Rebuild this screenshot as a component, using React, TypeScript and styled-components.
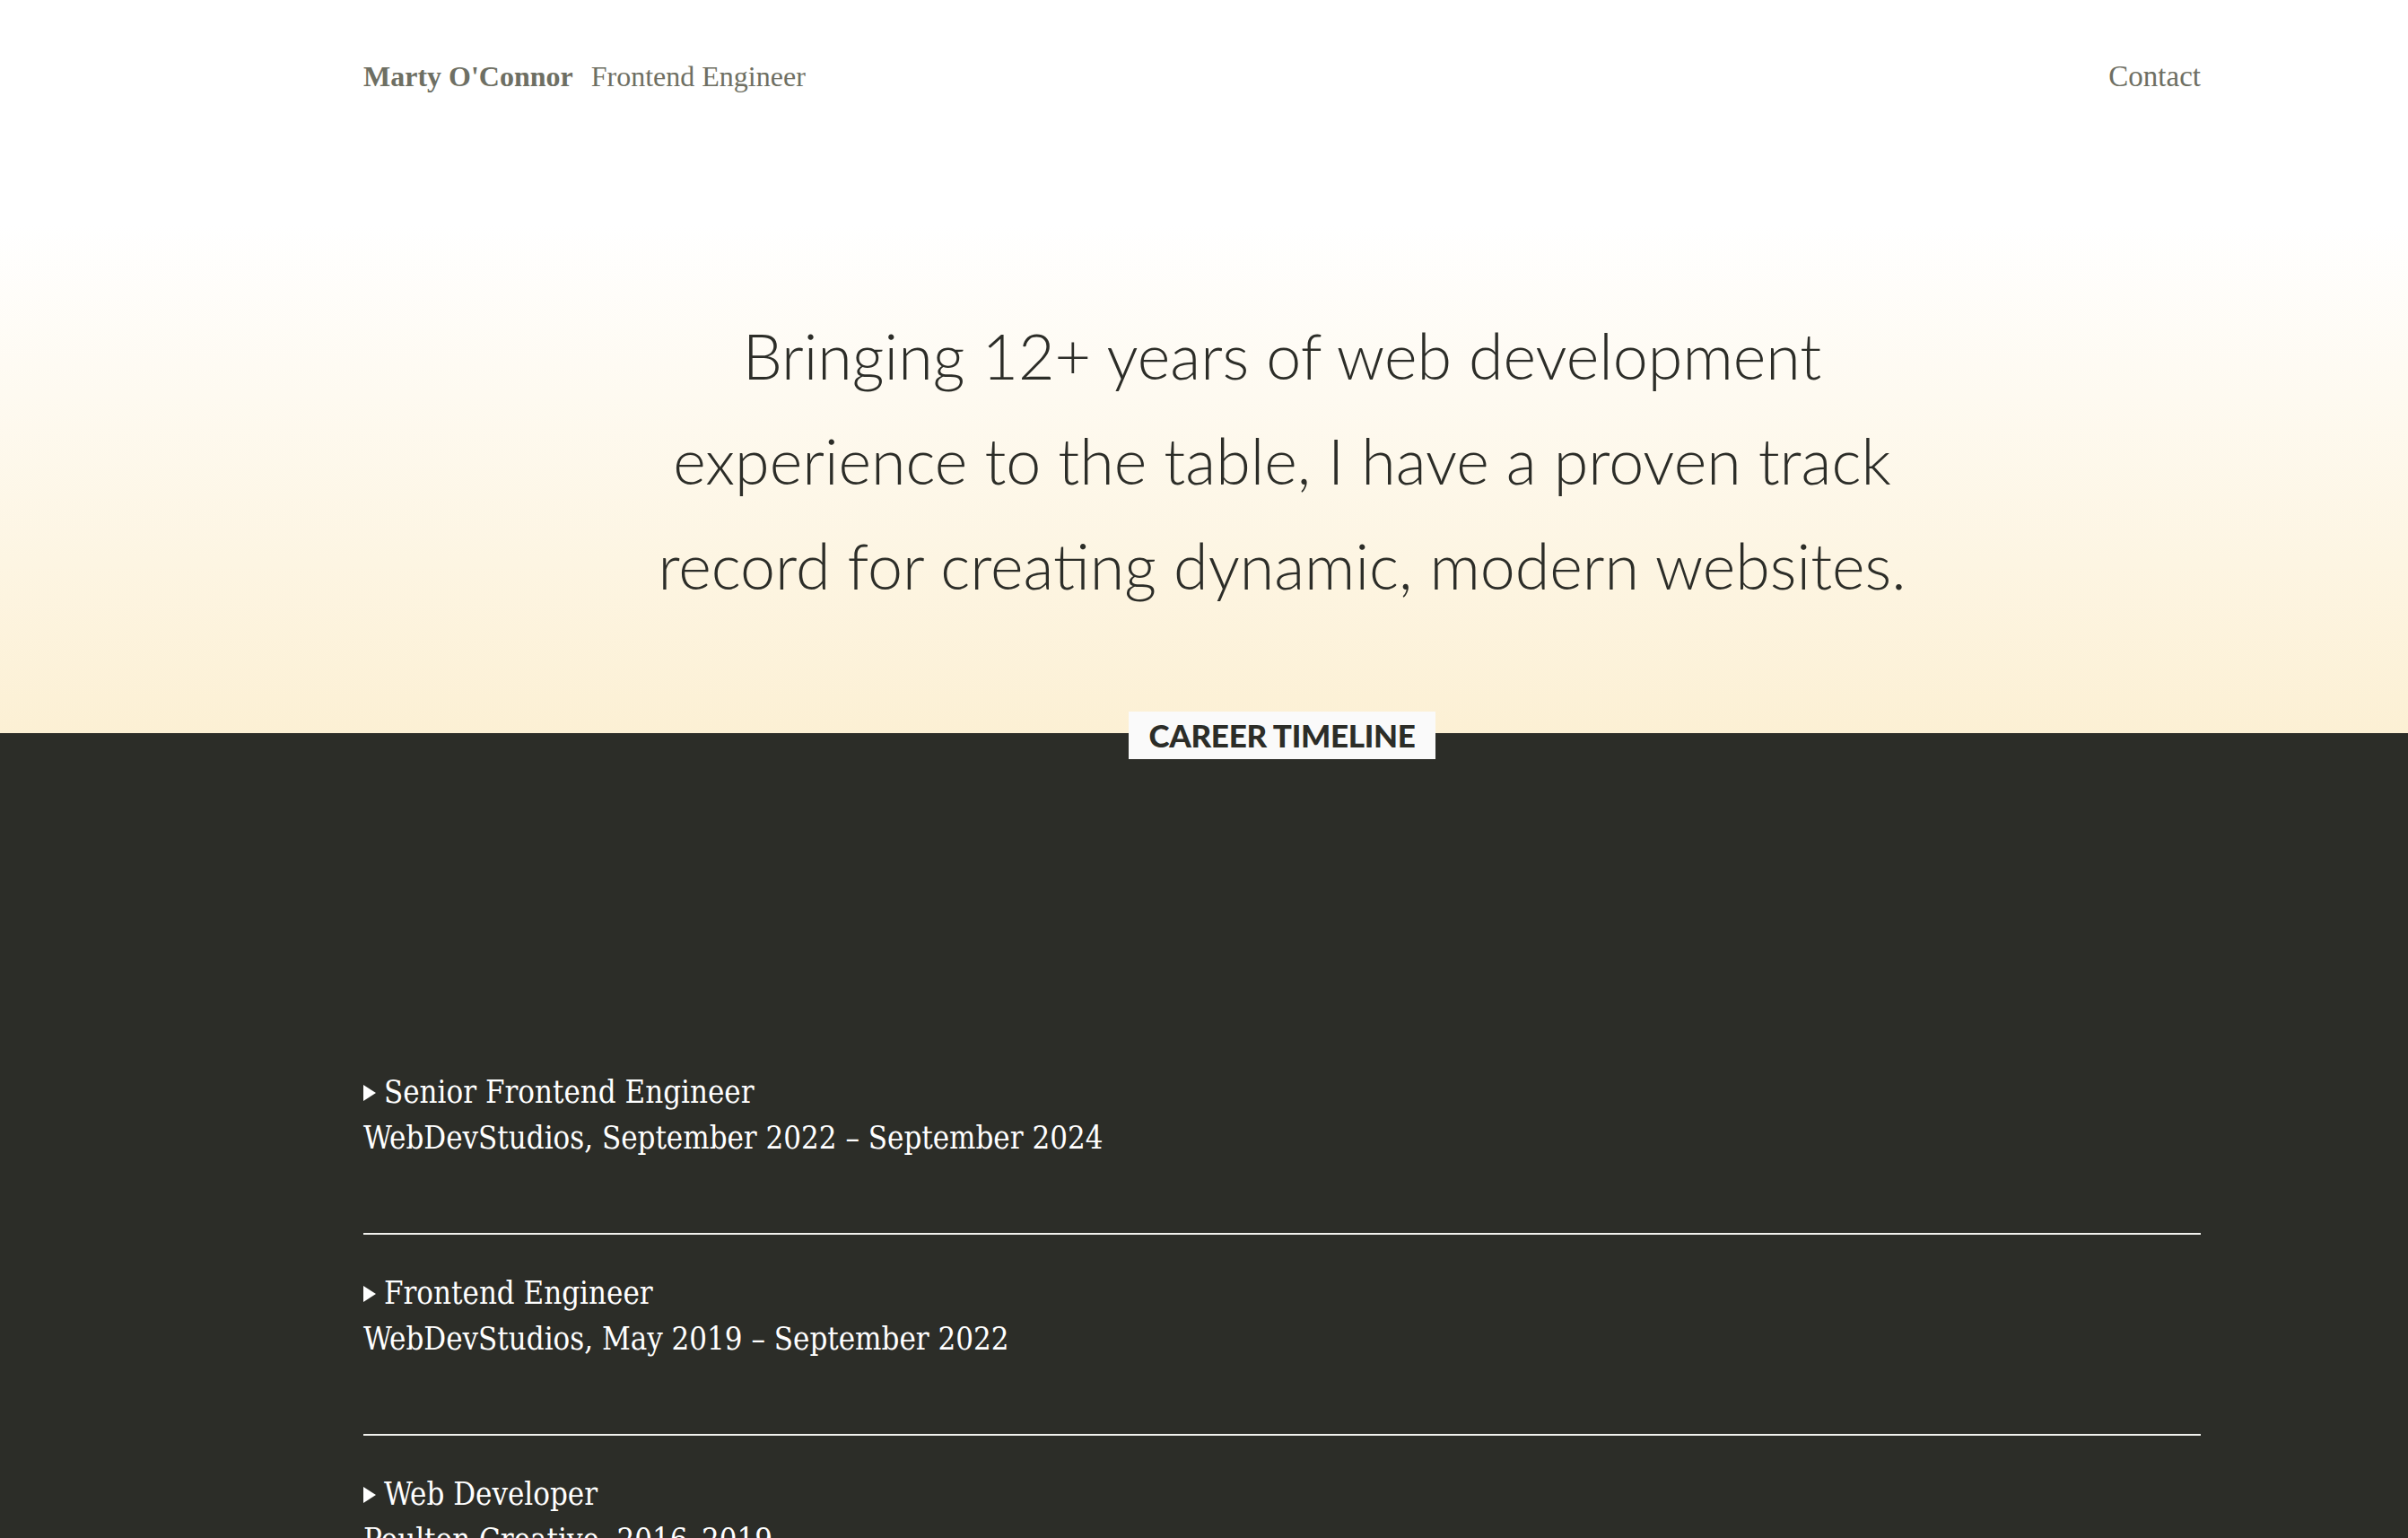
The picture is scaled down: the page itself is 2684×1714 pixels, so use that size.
import React from "react";
import styled, { createGlobalStyle } from "styled-components";

const Global = createGlobalStyle`
  html, body { margin: 0; padding: 0; background: #2c2d28; }
  * { box-sizing: border-box; }
`;

const Page = styled.div`
  height: 1714px;
  overflow: hidden;
  display: flex;
  flex-direction: column;
`;

const Top = styled.div`
  background: linear-gradient(180deg, #ffffff 0px, #ffffff 250px, #fcf0d4 817px);
  height: 817px;
  flex-shrink: 0;
  display: flex;
  flex-direction: column;
`;

const Container = styled.div`
  width: 2048px;
  margin-left: 405px;
`;

const Header = styled.header`
  padding-top: 67px;
  display: flex;
  justify-content: space-between;
  align-items: baseline;
  font-family: "Liberation Serif", "Times New Roman", serif;
  color: #6e6f63;
`;

const Brand = styled.div`
  display: flex;
  align-items: baseline;
  gap: 20px;
`;

const Name = styled.span`
  font-weight: 700;
  font-size: 32px;
`;

const Role = styled.span`
  font-size: 32px;
`;

const Contact = styled.a`
  font-size: 33px;
  color: inherit;
  text-decoration: none;
`;

const Hero = styled.p`
  margin: 234px auto 0;
  max-width: 1440px;
  text-align: center;
  font-family: Lato, "Open Sans", sans-serif;
  font-weight: 300;
  font-size: 70px;
  line-height: 117px;
  color: #2c2d28;
`;

const Dark = styled.section`
  background: #2c2d28;
  flex: 1;
  display: flex;
  flex-direction: column;
`;

const LabelRow = styled.div`
  display: flex;
  justify-content: center;
`;

const Label = styled.h2`
  margin: -24px 0 0;
  background: #fafafa;
  color: #2c2d28;
  font-family: Lato, "Open Sans", sans-serif;
  font-weight: 900;
  font-size: 35px;
  line-height: 53px;
  padding: 0 22px;
  text-transform: uppercase;
  letter-spacing: -0.3px;
`;

const Timeline = styled.ul`
  list-style: none;
  margin: 306px 0 0;
  padding: 0;
`;

const Item = styled.li`
  padding: 40px 0 80px;
  border-top: 2px solid #f2f2ee;
  &:first-child { border-top: none; }
  font-family: "DejaVu Serif Condensed", "DejaVu Serif", serif;
  color: #ffffff;
  font-size: 34.5px;
  line-height: 51px;
`;

const Title = styled.div`
  display: flex;
  align-items: center;
  gap: 9px;
`;

const Arrow = styled.span`
  width: 0;
  height: 0;
  border-top: 9px solid transparent;
  border-bottom: 9px solid transparent;
  border-left: 14px solid #ffffff;
`;

const Meta = styled.div``;

const jobs = [
  { title: "Senior Frontend Engineer", meta: "WebDevStudios, September 2022 – September 2024" },
  { title: "Frontend Engineer", meta: "WebDevStudios, May 2019 – September 2022" },
  { title: "Web Developer", meta: "Poulton Creative, 2016–2019" },
];

export default function App() {
  return (
    <Page>
      <Global />
      <Top>
        <Container>
          <Header>
            <Brand>
              <Name>Marty O'Connor</Name>
              <Role>Frontend Engineer</Role>
            </Brand>
            <Contact href="#">Contact</Contact>
          </Header>
          <Hero>
            Bringing 12+ years of web development experience to the table, I have a proven track record for creating dynamic, modern websites.
          </Hero>
        </Container>
      </Top>
      <Dark>
        <Container>
          <LabelRow>
            <Label>Career Timeline</Label>
          </LabelRow>
          <Timeline>
            {jobs.map((j) => (
              <Item key={j.title}>
                <Title>
                  <Arrow />
                  {j.title}
                </Title>
                <Meta>{j.meta}</Meta>
              </Item>
            ))}
          </Timeline>
        </Container>
      </Dark>
    </Page>
  );
}
